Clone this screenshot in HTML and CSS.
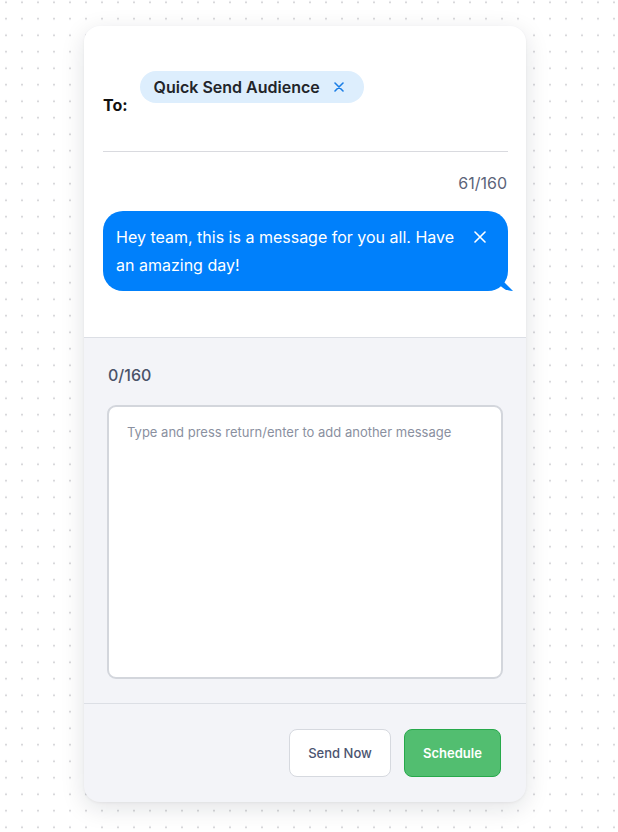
FILE: index.html
```html
<!DOCTYPE html>
<html lang="en">
<head>
    <meta charset="UTF-8">
    <meta name="viewport" content="width=device-width, initial-scale=1.0">
    <title>Quick Send</title>
    <link rel="stylesheet" href="styles.css">
</head>
<body>
    <div class="composer">
        <div class="compose-top">
            <div class="to-row">
                <span class="to-label">To:</span>
                <span class="chip">
                    Quick Send Audience
                    <svg class="chip-close" width="10" height="10" viewBox="0 0 10 10">
                        <path d="M1 1L9 9M9 1L1 9" stroke="currentColor" stroke-width="1.6" stroke-linecap="round"/>
                    </svg>
                </span>
            </div>

            <div class="counter counter-right">61/160</div>

            <div class="bubble">
                <p class="bubble-text">Hey team, this is a message for you all. Have an amazing day!</p>
                <svg class="bubble-close" width="12" height="12" viewBox="0 0 12 12">
                    <path d="M1 1L11 11M11 1L1 11" stroke="currentColor" stroke-width="1.6" stroke-linecap="round"/>
                </svg>
            </div>
        </div>

        <div class="compose-bottom">
            <div class="counter counter-left">0/160</div>
            <textarea class="message-input" placeholder="Type and press return/enter to add another message"></textarea>
        </div>

        <div class="compose-actions">
            <button class="btn btn-outline">Send Now</button>
            <button class="btn btn-green">Schedule</button>
        </div>
    </div>
</body>
</html>
```

FILE: styles.css
```css
body {
    font-family: Inter, "Noto Sans", Arial, sans-serif;
    margin: 0;
    padding: 26px 0 0 84px;
    min-height: 100vh;
    box-sizing: border-box;
    background-color: #ffffff;
    background-image: radial-gradient(circle, #cfcfd3 0.8px, transparent 1.2px);
    background-size: 16px 16.5px;
    background-position: -2px -6px;
}

.composer {
    width: 442px;
    background-color: #f3f4f8;
    border-radius: 16px;
    box-shadow: 0 6px 24px rgba(20, 24, 40, 0.12), 0 1px 3px rgba(0, 0, 0, 0.05);
    overflow: hidden;
}

.compose-top {
    background-color: #ffffff;
    padding: 45px 18px 46px 19px;
    border-bottom: 1px solid #dcdfe5;
}

.to-row {
    display: flex;
    align-items: flex-end;
    gap: 12px;
    padding-bottom: 34px;
    border-bottom: 1px solid #d9dadf;
}

.to-label {
    font-size: 16px;
    font-weight: 700;
    line-height: 24px;
    color: #111111;
}

.chip {
    display: inline-flex;
    align-items: center;
    gap: 14px;
    height: 32px;
    padding: 0 20px 0 14px;
    margin-bottom: 14px;
    background-color: #ddeefd;
    border-radius: 16px;
    font-size: 16px;
    font-weight: 600;
    color: #222429;
}

.chip-close {
    color: #1b7ee6;
}

.counter {
    font-size: 16px;
    line-height: 24px;
    color: #5c6479;
}

.counter-right {
    text-align: right;
    margin-top: 19px;
    padding-right: 1px;
}

.bubble {
    position: relative;
    display: flex;
    align-items: flex-start;
    margin-top: 16px;
    padding: 12px 22px 12px 13px;
    background-color: #0080fb;
    border-radius: 20px;
    color: #ffffff;
}

.bubble::after {
    content: "";
    position: absolute;
    right: -5px;
    bottom: 0;
    width: 14px;
    height: 14px;
    background-color: #0080fb;
    border-bottom-left-radius: 14px 10px;
    clip-path: polygon(0 0, 100% 100%, 0 100%);
}

.bubble-text {
    flex: 1;
    margin: 0;
    font-size: 16px;
    line-height: 28px;
    padding-right: 6px;
}

.bubble-close {
    margin-top: 8px;
    margin-left: 4px;
    color: #ffffff;
}

.compose-bottom {
    padding: 25px 23px 24px 23px;
    border-bottom: 1px solid #dcdfe5;
}

.counter-left {
    font-weight: 500;
    color: #4b5368;
    padding-left: 1px;
}

.message-input {
    display: block;
    width: 100%;
    height: 274px;
    margin-top: 18px;
    padding: 17px 18px;
    box-sizing: border-box;
    border: 2px solid #d3d6dc;
    border-radius: 9px;
    background-color: #ffffff;
    font-family: Inter, "Noto Sans", Arial, sans-serif;
    font-size: 13px;
    color: #333333;
    resize: none;
    outline: none;
}

.message-input::placeholder {
    color: #8a90a0;
}

.compose-actions {
    display: flex;
    justify-content: flex-end;
    gap: 13px;
    padding: 25px 25px 25px 25px;
}

.btn {
    height: 48px;
    padding: 0 18px;
    border-radius: 8px;
    font-family: Inter, "Noto Sans", Arial, sans-serif;
    font-size: 13px;
    font-weight: 500;
    cursor: pointer;
}

.btn-outline {
    width: 102px;
    background-color: #ffffff;
    border: 1px solid #d6d9df;
    color: #4b5470;
}

.btn-green {
    width: 97px;
    background-color: #52be70;
    border: 1px solid #27a94b;
    color: #ffffff;
    font-weight: 600;
}
```
